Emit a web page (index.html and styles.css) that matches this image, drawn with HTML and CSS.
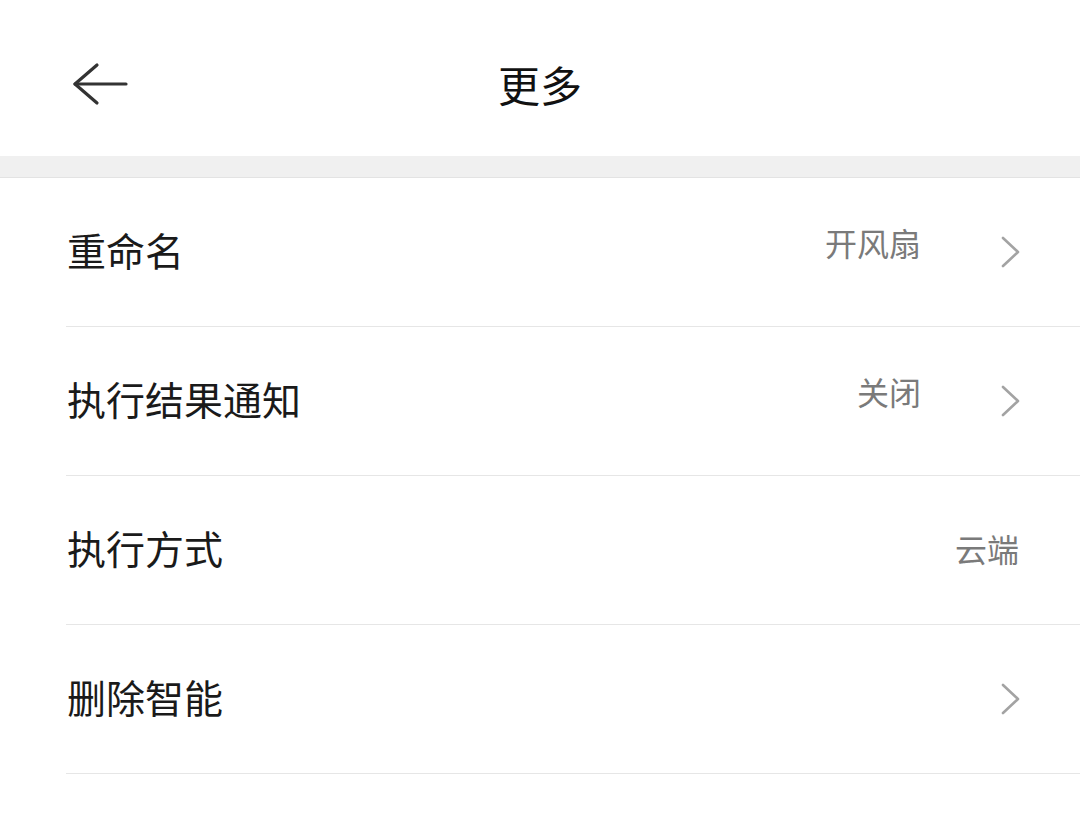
FILE: index.html
```html
<!DOCTYPE html>
<html lang="zh-CN">
<head>
<meta charset="utf-8">
<title>更多</title>
<link rel="stylesheet" href="styles.css">
</head>
<body>
<div class="page">
  <header class="topbar">
    <div class="back">
      <svg width="60" height="48" viewBox="0 0 60 48" fill="none" stroke="#333" stroke-width="3.2" stroke-linecap="round" stroke-linejoin="round">
        <path d="M11 24 H62"/>
        <path d="M33 5 L11 24 L33 43"/>
      </svg>
    </div>
    <h1 class="title">更多</h1>
    <div class="spacer"></div>
  </header>
  <div class="band"></div>
  <ul class="list">
    <li class="row">
      <span class="label">重命名</span>
      <span class="right">
        <span class="value raised">开风扇</span>
        <svg class="chev" width="24" height="36" viewBox="0 0 24 36" fill="none" stroke="#a3a3a3" stroke-width="2.6" stroke-linecap="round" stroke-linejoin="round"><path d="M5 4 L20 18 L5 32"/></svg>
      </span>
    </li>
    <li class="row">
      <span class="label">执行结果通知</span>
      <span class="right">
        <span class="value raised">关闭</span>
        <svg class="chev" width="24" height="36" viewBox="0 0 24 36" fill="none" stroke="#a3a3a3" stroke-width="2.6" stroke-linecap="round" stroke-linejoin="round"><path d="M5 4 L20 18 L5 32"/></svg>
      </span>
    </li>
    <li class="row">
      <span class="label">执行方式</span>
      <span class="right">
        <span class="value plain">云端</span>
      </span>
    </li>
    <li class="row">
      <span class="label">删除智能</span>
      <span class="right">
        <svg class="chev" width="24" height="36" viewBox="0 0 24 36" fill="none" stroke="#a3a3a3" stroke-width="2.6" stroke-linecap="round" stroke-linejoin="round"><path d="M5 4 L20 18 L5 32"/></svg>
      </span>
    </li>
  </ul>
</div>
</body>
</html>
```

FILE: styles.css
```css
html, body {
  margin: 0;
  padding: 0;
  background: #ffffff;
}

body {
  font-family: "Noto Sans CJK SC", "Noto Sans", sans-serif;
  color: #1a1a1a;
}

.page {
  width: 1080px;
  min-height: 836px;
  background: #ffffff;
}

.topbar {
  height: 144px;
  padding-top: 12px;
  display: grid;
  grid-template-columns: 1fr auto 1fr;
  align-items: center;
}

.back {
  padding-left: 64px;
  display: flex;
  align-items: center;
  height: 48px;
}

.back svg {
  display: block;
  overflow: visible;
}

.title {
  margin: 0;
  font-size: 42px;
  font-weight: 400;
  line-height: 1;
  color: #111;
}

.band {
  height: 21px;
  background: #f0f0f0;
  border-bottom: 1px solid #e3e3e3;
}

.list {
  list-style: none;
  margin: 0;
  padding: 0 0 0 66px;
}

.row {
  height: 148px;
  border-bottom: 1px solid #e6e6e6;
  display: flex;
  align-items: center;
  justify-content: space-between;
  padding-right: 58px;
}

.label {
  font-size: 39px;
  line-height: 1;
  color: #1a1a1a;
  padding-left: 1px;
  margin-bottom: 5px;
}

.right {
  display: flex;
  align-items: center;
  gap: 77px;
}

.value {
  font-size: 32px;
  line-height: 1;
  color: #7a7a7a;
}

.value.raised {
  margin-bottom: 20px;
}

.value.plain {
  margin-right: 3px;
  margin-bottom: 4px;
}

.chev {
  display: block;
}
```
